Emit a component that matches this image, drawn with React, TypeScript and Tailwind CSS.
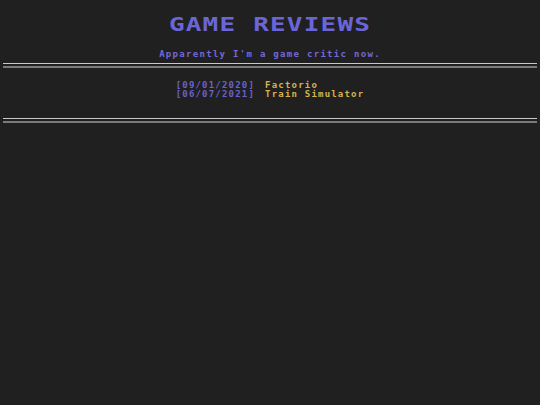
export default function App() {
  const reviews = [
    { date: "[09/01/2020]", title: "Factorio" },
    { date: "[06/07/2021]", title: "Train Simulator" },
  ];
  return (
    <div
      className="min-h-[405px] w-full bg-[#202020] px-[3px]"
      style={{ fontFamily: '"DejaVu Sans Mono", "Liberation Mono", monospace' }}
    >
      <header className="flex flex-col items-center pt-[12px]">
        <h1 className="scale-y-[0.78] text-[26px] leading-[24px] font-bold tracking-[1.2px] text-[#6b66d8]">
          GAME REVIEWS
        </h1>
        <p className="mt-[12px] text-[9px] leading-[12px] font-bold tracking-[1.3px] text-[#7468d6]">
          Apparently I'm a game critic now.
        </p>
      </header>
      <div className="mt-[3px] flex flex-col gap-[2px]">
        <div className="h-px bg-[#c8c8c8]" />
        <div className="h-[2px] bg-[#7a7a7a]" />
      </div>
      <ul className="flex flex-col items-center pt-[13px] pb-[19px]">
        <li className="flex flex-col">
          {reviews.map((r) => (
            <div key={r.date} className="flex text-[9px] leading-[9px] font-bold tracking-[1.2px]">
              <span className="text-[#6a62cc]">{r.date}</span>
              <span className="ml-[10px] text-[#d6b24e]">{r.title}</span>
            </div>
          ))}
        </li>
      </ul>
      <div className="flex flex-col gap-[2px]">
        <div className="h-px bg-[#c8c8c8]" />
        <div className="h-[2px] bg-[#7a7a7a]" />
      </div>
    </div>
  );
}
